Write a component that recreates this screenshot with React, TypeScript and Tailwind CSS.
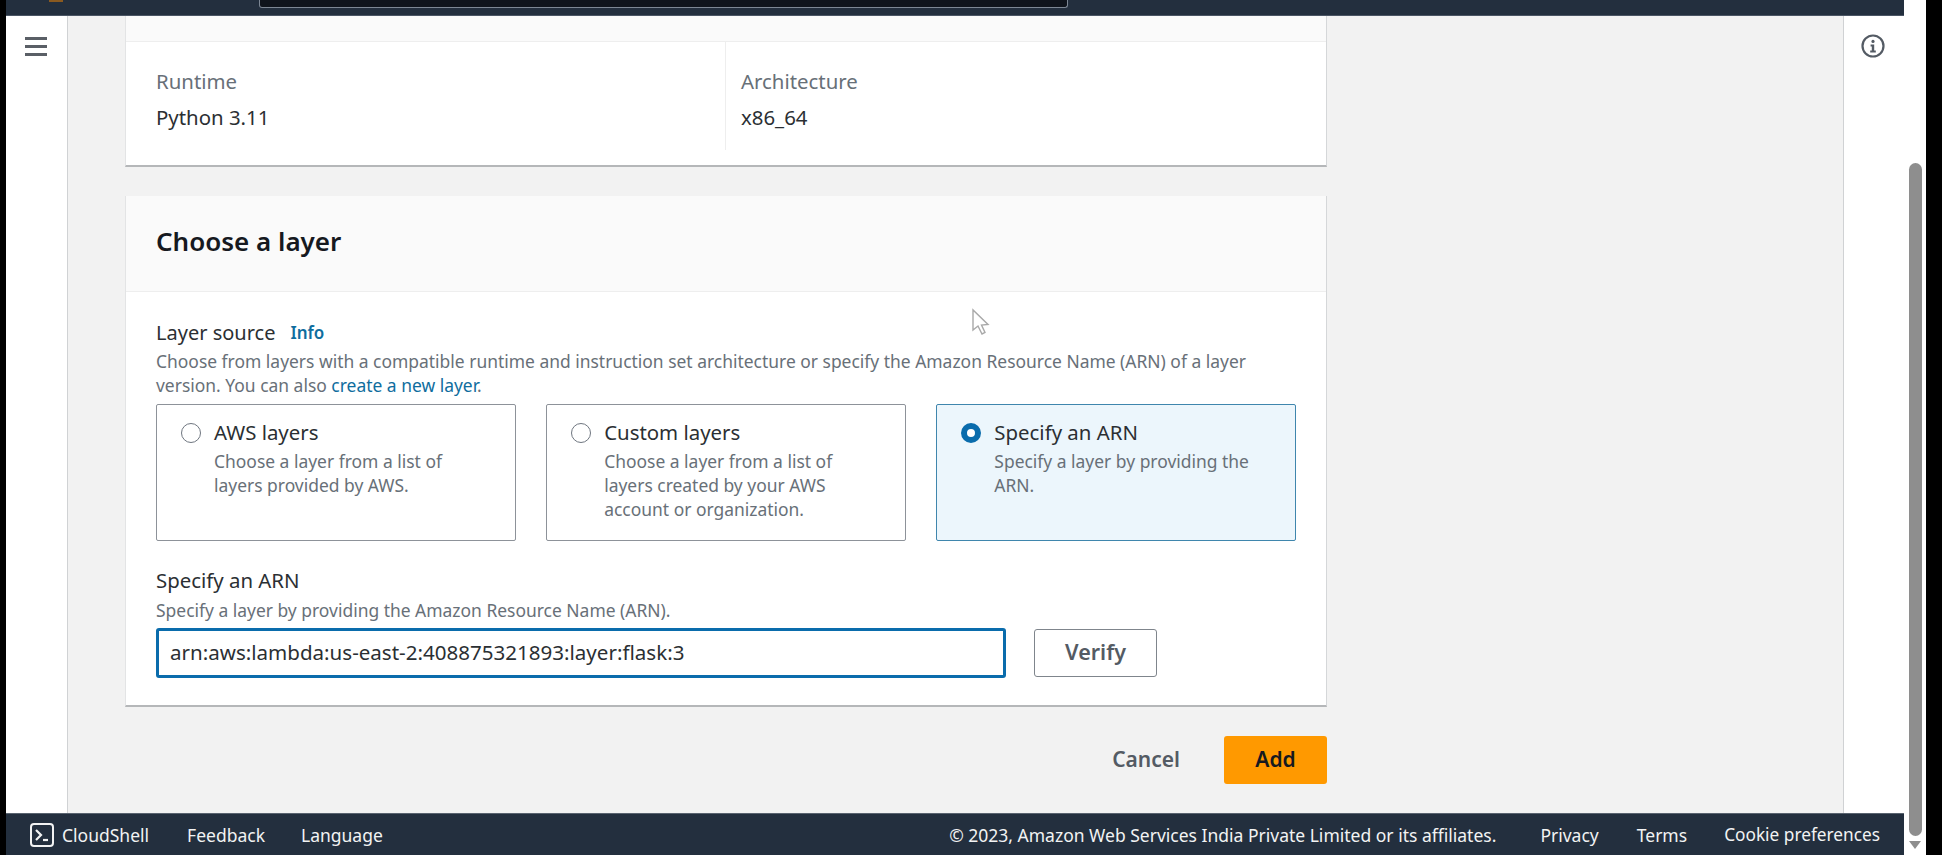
const font = "font-['Noto_Sans','Liberation_Sans',sans-serif]";

type TileProps = {
  title: string;
  lines: string[];
  selected?: boolean;
};

function LayerTile({ title, lines, selected }: TileProps) {
  return (
    <div
      className={`h-[137px] w-[360px] rounded-[2px] border pl-[24px] pt-[15px] ${
        selected ? "border-[#3f86ad] bg-[#ecf6fc]" : "border-[#8d9299] bg-white"
      }`}
    >
      <div className="flex items-start gap-[13px]">
        <span
          className={`mt-[3px] block h-[20px] w-[20px] shrink-0 rounded-full ${
            selected ? "border-[6px] border-[#0a6cac] bg-white" : "border border-[#6f7680] bg-white"
          }`}
        />
        <div>
          <div className="h-[25px] text-[20.4px] leading-[24px] text-[#2b2f33]">{title}</div>
          <div className="mt-[4px] text-[17.45px] leading-[24px] text-[#687078]">
            {lines.map((line) => (
              <div key={line}>{line}</div>
            ))}
          </div>
        </div>
      </div>
    </div>
  );
}

function Cursor() {
  return (
    <svg
      viewBox="0 0 20 28"
      className="absolute left-[971px] top-[308px] h-[28px] w-[20px]"
    >
      <path
        d="M2 2 L2 22 L7 18 L11 26 L14 24.5 L10.5 17 L17 16.5 Z"
        fill="#ffffff"
        stroke="#a9a9a9"
        strokeWidth="1.4"
      />
    </svg>
  );
}

export default function App() {
  return (
    <div className={`relative flex h-[855px] w-[1942px] overflow-hidden bg-black ${font}`}>
      <div className="w-[6px] shrink-0" />

      <div className="flex w-[1898px] shrink-0 flex-col">
        {/* top nav, mostly scrolled off */}
        <div className="flex h-[16px] shrink-0 border-b border-[#4a5564] bg-[#232f3e]">
          <div className="ml-[43px] h-[2px] w-[14px] bg-[#8a5a20]" />
          <div className="ml-[196px] h-[8px] w-[809px] rounded-b-[3px] border border-t-0 border-[#7d8794] bg-[#0f141c]" />
        </div>

        <div className="flex min-h-0 flex-1">
          <div className="flex w-[62px] shrink-0 justify-center border-r border-[#d0d2d4] bg-white pt-[21px]">
            <div className="mr-[2px] flex h-[19px] w-[22px] flex-col justify-between">
              <span className="block h-[3px] bg-[#5a5f66]" />
              <span className="block h-[3px] bg-[#5a5f66]" />
              <span className="block h-[3px] bg-[#5a5f66]" />
            </div>
          </div>

          <main className="flex min-w-0 flex-1 flex-col bg-[#f2f2f2] pl-[57px]">
            {/* function details card */}
            <section className="w-[1202px] border-b-2 border-r border-l border-b-[#b5b7b9] border-r-[#d5d7d9] border-l-[#e3e4e5] bg-white">
              <div className="h-[26px] border-b border-[#eeeeee] bg-[#fafafa]" />
              <div className="flex h-[123px]">
                <div className="w-[599px] pl-[30px] pt-[26px]">
                  <div className="text-[20.4px] leading-[26px] text-[#687078]">Runtime</div>
                  <div className="mt-[10px] text-[20.4px] leading-[26px] text-[#2b2f33]">Python 3.11</div>
                </div>
                <div className="mb-[15px] w-px bg-[#eeeeee]" />
                <div className="pl-[15px] pt-[26px]">
                  <div className="text-[20.4px] leading-[26px] text-[#687078]">Architecture</div>
                  <div className="mt-[10px] text-[20.4px] leading-[26px] text-[#2b2f33]">x86_64</div>
                </div>
              </div>
            </section>

            {/* layer picker card */}
            <section className="mt-[29px] h-[511px] w-[1202px] border-b-2 border-r border-l border-b-[#b5b7b9] border-r-[#d5d7d9] border-l-[#e3e4e5] bg-white">
              <div className="flex h-[96px] items-center border-b border-[#eeeeee] bg-[#fafafa] pb-[5px] pl-[30px]">
                <h2 className="text-[26px] font-semibold leading-[30px] text-[#16191f]">Choose a layer</h2>
              </div>
              <div className="px-[30px] pt-[28px]">
                <div className="flex h-[26px] items-center gap-[15px]">
                  <span className="text-[20px] leading-[26px] text-[#2b2f33]">Layer source</span>
                  <span className="text-[17px] font-semibold leading-[26px] text-[#0f6d9e]">Info</span>
                </div>
                <p className="mt-[3px] whitespace-nowrap text-[17.45px] leading-[24px] text-[#687078]">
                  Choose from layers with a compatible runtime and instruction set architecture or specify the Amazon Resource Name (ARN) of a layer
                  <br />
                  version. You can also <span className="text-[#0f6d9e]">create a new layer</span>.
                </p>

                <div className="mt-[7px] flex gap-[30.5px]">
                  <LayerTile
                    title="AWS layers"
                    lines={["Choose a layer from a list of", "layers provided by AWS."]}
                  />
                  <LayerTile
                    title="Custom layers"
                    lines={["Choose a layer from a list of", "layers created by your AWS", "account or organization."]}
                  />
                  <LayerTile
                    title="Specify an ARN"
                    lines={["Specify a layer by providing the", "ARN."]}
                    selected
                  />
                </div>

                <div className="mt-[26px] text-[20.4px] leading-[26px] text-[#2b2f33]">Specify an ARN</div>
                <div className="mt-[5px] text-[17.45px] leading-[24px] text-[#687078]">
                  Specify a layer by providing the Amazon Resource Name (ARN).
                </div>
                <div className="mt-[6px] flex items-center gap-[28px]">
                  <div className="flex h-[50px] w-[850px] items-center rounded-[3px] border-[3px] border-[#0a6cac] bg-white pb-[1px] pl-[11px] text-[20.55px] text-[#2b2f33]">
                    arn:aws:lambda:us-east-2:408875321893:layer:flask:3
                  </div>
                  <button className="h-[48px] w-[123px] rounded-[3px] border border-[#7f858c] bg-white pb-[2px] text-[21.5px] font-semibold text-[#545b64]">
                    Verify
                  </button>
                </div>
              </div>
            </section>

            <div className="mt-[29px] flex w-[1202px] items-center justify-end gap-[44px]">
              <span className="text-[21px] font-semibold text-[#545b64]">Cancel</span>
              <button className="h-[48px] w-[103px] rounded-[3px] bg-[#ff9900] text-[21px] font-semibold text-[#16191f]">
                Add
              </button>
            </div>
          </main>

          <div className="flex w-[61px] shrink-0 justify-center border-l border-[#d0d2d4] bg-white pt-[18px]">
            <svg viewBox="0 0 24 24" className="mr-[2px] h-[24px] w-[24px]" fill="none">
              <circle cx="12" cy="12" r="10.5" stroke="#545b64" strokeWidth="2.2" />
              <circle cx="12" cy="7.4" r="1.6" fill="#545b64" />
              <path d="M9.6 10.6h3.6v6h1.6v1.8H9.2v-1.8h1.6v-4.2H9.6z" fill="#545b64" />
            </svg>
          </div>
        </div>

        <footer className="flex h-[42px] shrink-0 items-center border-t border-[#59636f] bg-[#232f3e] pt-[1px] text-[17.5px] text-[#f2f3f3]">
          <svg viewBox="0 0 24 24" className="ml-[24px] h-[24px] w-[24px]" fill="none">
            <rect x="1" y="1" width="22" height="22" rx="3" stroke="#f2f3f3" strokeWidth="2" />
            <path d="M6 7l5 5-5 5" stroke="#f2f3f3" strokeWidth="2.2" />
            <path d="M13 17h5" stroke="#f2f3f3" strokeWidth="2.2" />
          </svg>
          <span className="ml-[8px]">CloudShell</span>
          <span className="ml-[38px]">Feedback</span>
          <span className="ml-[36px]">Language</span>
          <span className="ml-auto">© 2023, Amazon Web Services India Private Limited or its affiliates.</span>
          <span className="ml-[44px]">Privacy</span>
          <span className="ml-[38px]">Terms</span>
          <span className="ml-[37px] mr-[24px] text-[17.25px]">Cookie preferences</span>
        </footer>
      </div>

      {/* page scrollbar */}
      <div className="flex w-[22px] shrink-0 flex-col items-center bg-white pt-[163px]">
        <div className="h-[673px] w-[13px] rounded-full bg-[#8e8e8e]" />
        <div className="mt-[5px] h-0 w-0 border-x-[6px] border-t-[8px] border-x-transparent border-t-[#8e8e8e]" />
      </div>

      <div className="w-[16px] shrink-0" />
      <Cursor />
    </div>
  );
}
